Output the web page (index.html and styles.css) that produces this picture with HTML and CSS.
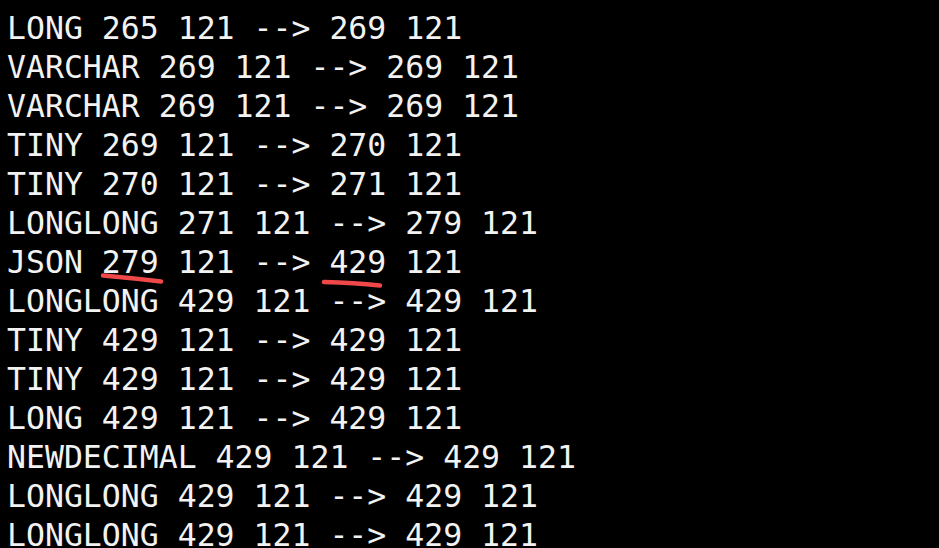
FILE: index.html
```html
<!DOCTYPE html>
<html>
<head>
<meta charset="utf-8">
<link rel="stylesheet" href="styles.css">
</head>
<body>
<main class="term">
<div class="line">LONG 265 121 --&gt; 269 121</div>
<div class="line">VARCHAR 269 121 --&gt; 269 121</div>
<div class="line">VARCHAR 269 121 --&gt; 269 121</div>
<div class="line">TINY 269 121 --&gt; 270 121</div>
<div class="line">TINY 270 121 --&gt; 271 121</div>
<div class="line">LONGLONG 271 121 --&gt; 279 121</div>
<div class="line">JSON 279 121 --&gt; 429 121</div>
<div class="line">LONGLONG 429 121 --&gt; 429 121</div>
<div class="line">TINY 429 121 --&gt; 429 121</div>
<div class="line">TINY 429 121 --&gt; 429 121</div>
<div class="line">LONG 429 121 --&gt; 429 121</div>
<div class="line">NEWDECIMAL 429 121 --&gt; 429 121</div>
<div class="line">LONGLONG 429 121 --&gt; 429 121</div>
<div class="line">LONGLONG 429 121 --&gt; 429 121</div>
</main>
<svg class="marks" width="939" height="548" viewBox="0 0 939 548">
  <path d="M103 275.5 C 120 277, 140 279, 161 281.5" />
  <path d="M324 282 C 340 282.5, 360 283.5, 380 285.5" />
</svg>
</body>
</html>
```
FILE: styles.css
```css
html, body {
  margin: 0;
  padding: 0;
  background: #000;
  width: 939px;
  height: 548px;
  overflow: hidden;
}
body {
  position: relative;
}
.term {
  padding: 8.5px 0 0 7px;
  font-family: "DejaVu Sans Mono", monospace;
  font-size: 31.5px;
  line-height: 39px;
  color: #f2f2f2;
}
.line {
  white-space: pre;
  height: 39px;
}
.marks {
  position: absolute;
  left: 0;
  top: 0;
  pointer-events: none;
}
.marks path {
  fill: none;
  stroke: #f04848;
  stroke-width: 4.5;
  stroke-linecap: round;
}
```
